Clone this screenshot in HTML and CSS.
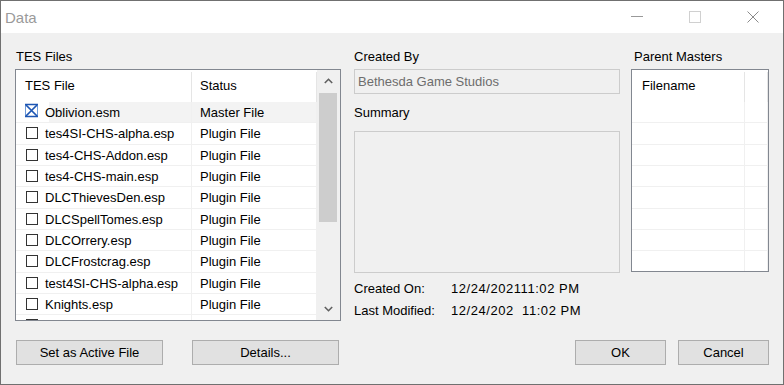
FILE: index.html
```html
<!DOCTYPE html>
<html lang="en">
<head>
  <meta charset="UTF-8" />
  <title>Data</title>
  <link rel="stylesheet" href="styles.css">
</head>
<body>
  <div class="window">
    <div class="titlebar">
      <span class="title">Data</span>
      <div class="caption">
        <span class="cap">
          <svg width="12" height="12" viewBox="0 0 12 12"><line x1="0" y1="5.5" x2="12" y2="5.5" stroke="#999" stroke-width="1"/></svg>
        </span>
        <span class="cap">
          <svg width="12" height="12" viewBox="0 0 12 12"><rect x="0.5" y="0.5" width="11" height="11" fill="none" stroke="#d0d0d0" stroke-width="1"/></svg>
        </span>
        <span class="cap">
          <svg width="12" height="12" viewBox="0 0 12 12"><path d="M0.5 0.5 L11.5 11.5 M11.5 0.5 L0.5 11.5" stroke="#8a8a8a" stroke-width="1" fill="none"/></svg>
        </span>
      </div>
    </div>

    <div class="client">
      <div class="panes">
        <div class="pane pane-files">
          <div class="label pad1">TES Files</div>
          <div class="listview files">
            <div class="lv-main">
              <div class="lv-header">
                <div class="hcell c-name">TES File</div>
                <div class="hcell c-status">Status</div>
              </div>
              <div class="row selected">
                <div class="cell c-name">
                  <span class="state">
                    <svg class="xcheck" width="16" height="16" viewBox="0 0 16 16">
                      <rect x="1.5" y="1.5" width="12" height="12" fill="none" stroke="#6f9ad8" stroke-width="1"/>
                      <path d="M1 1.5 H14 M1 13.5 H14" stroke="#1d56b3" stroke-width="1.6"/>
                      <path d="M2 2 L13 13 M13 2 L2 13" stroke="#1d56b3" stroke-width="1.7"/>
                    </svg>
                  </span>
                  <span class="fname">Oblivion.esm</span>
                </div>
                <div class="cell c-status">Master File</div>
              </div>
              <div class="row">
                <div class="cell c-name"><span class="state"><span class="chk"></span></span><span class="fname">tes4SI-CHS-alpha.esp</span></div>
                <div class="cell c-status">Plugin File</div>
              </div>
              <div class="row">
                <div class="cell c-name"><span class="state"><span class="chk"></span></span><span class="fname">tes4-CHS-Addon.esp</span></div>
                <div class="cell c-status">Plugin File</div>
              </div>
              <div class="row">
                <div class="cell c-name"><span class="state"><span class="chk"></span></span><span class="fname">tes4-CHS-main.esp</span></div>
                <div class="cell c-status">Plugin File</div>
              </div>
              <div class="row">
                <div class="cell c-name"><span class="state"><span class="chk"></span></span><span class="fname">DLCThievesDen.esp</span></div>
                <div class="cell c-status">Plugin File</div>
              </div>
              <div class="row">
                <div class="cell c-name"><span class="state"><span class="chk"></span></span><span class="fname">DLCSpellTomes.esp</span></div>
                <div class="cell c-status">Plugin File</div>
              </div>
              <div class="row">
                <div class="cell c-name"><span class="state"><span class="chk"></span></span><span class="fname">DLCOrrery.esp</span></div>
                <div class="cell c-status">Plugin File</div>
              </div>
              <div class="row">
                <div class="cell c-name"><span class="state"><span class="chk"></span></span><span class="fname">DLCFrostcrag.esp</span></div>
                <div class="cell c-status">Plugin File</div>
              </div>
              <div class="row">
                <div class="cell c-name"><span class="state"><span class="chk"></span></span><span class="fname">test4SI-CHS-alpha.esp</span></div>
                <div class="cell c-status">Plugin File</div>
              </div>
              <div class="row">
                <div class="cell c-name"><span class="state"><span class="chk"></span></span><span class="fname">Knights.esp</span></div>
                <div class="cell c-status">Plugin File</div>
              </div>
              <div class="row">
                <div class="cell c-name"><span class="state"><span class="chk"></span></span></div>
                <div class="cell c-status"></div>
              </div>
            </div>
            <div class="vscroll">
              <div class="sb-btn">
                <svg width="9" height="6" viewBox="0 0 9 6"><path d="M0.8 5 L4.5 1.3 L8.2 5" fill="none" stroke="#606060" stroke-width="1.6"/></svg>
              </div>
              <div class="sb-track"><div class="sb-thumb"></div></div>
              <div class="sb-btn">
                <svg width="9" height="6" viewBox="0 0 9 6"><path d="M0.8 1 L4.5 4.7 L8.2 1" fill="none" stroke="#606060" stroke-width="1.6"/></svg>
              </div>
            </div>
          </div>
        </div>

        <div class="pane pane-info">
          <div class="label">Created By</div>
          <div class="textbox">Bethesda Game Studios</div>
          <div class="label summary-label">Summary</div>
          <div class="summary"></div>
          <div class="dates">
            <div class="date-row"><span class="date-key">Created On:</span><span class="date-val">12/24/202111:02 PM</span></div>
            <div class="date-row"><span class="date-key">Last Modified:</span><span class="date-val">12/24/202&nbsp; 11:02 PM</span></div>
          </div>
        </div>

        <div class="pane pane-masters">
          <div class="label pad3">Parent Masters</div>
          <div class="listview masters">
            <div class="lv-main">
              <div class="lv-header">
                <div class="hcell m-name">Filename</div>
                <div class="hcell m-rest"></div>
              </div>
              <div class="row"><div class="cell m-name"></div><div class="cell m-rest"></div></div>
              <div class="row"><div class="cell m-name"></div><div class="cell m-rest"></div></div>
              <div class="row"><div class="cell m-name"></div><div class="cell m-rest"></div></div>
              <div class="row"><div class="cell m-name"></div><div class="cell m-rest"></div></div>
              <div class="row"><div class="cell m-name"></div><div class="cell m-rest"></div></div>
              <div class="row"><div class="cell m-name"></div><div class="cell m-rest"></div></div>
              <div class="row"><div class="cell m-name"></div><div class="cell m-rest"></div></div>
              <div class="row"><div class="cell m-name"></div><div class="cell m-rest"></div></div>
            </div>
          </div>
        </div>
      </div>

      <div class="buttons">
        <div class="btn-group left">
          <button class="btn wide">Set as Active File</button>
          <button class="btn wide">Details...</button>
        </div>
        <div class="btn-group right">
          <button class="btn">OK</button>
          <button class="btn">Cancel</button>
        </div>
      </div>
    </div>
  </div>
</body>
</html>
```

FILE: styles.css
```css
* {
  box-sizing: border-box;
}

body {
  margin: 0;
  font-family: 'Liberation Sans', Arial, sans-serif;
  font-size: 13px;
  color: #000;
  background: #f0f0f0;
}

.window {
  width: 784px;
  height: 385px;
  border: 1px solid #707070;
  display: flex;
  flex-direction: column;
  overflow: hidden;
}

/* title bar */
.titlebar {
  height: 32px;
  background: #fff;
  display: flex;
  align-items: center;
  justify-content: space-between;
  padding-right: 1px;
}

.title {
  padding-left: 4px;
  font-size: 15px;
  color: #9a9a9a;
}

.caption {
  display: flex;
}

.cap {
  width: 58px;
  height: 32px;
  display: flex;
  align-items: center;
  justify-content: center;
}

.cap svg {
  display: block;
  margin-top: -1px;
}

/* client area */
.client {
  flex: 1;
  background: #f0f0f0;
  padding: 15px 14px 0 14px;
}

.panes {
  display: flex;
}

.pane {
  display: flex;
  flex-direction: column;
}

.pane-files {
  width: 326px;
}

.pane-info {
  width: 266px;
  margin-left: 13px;
}

.pane-masters {
  width: 138px;
  margin-left: 11px;
}

.label {
  height: 21px;
  line-height: 17px;
}

.pad1 {
  padding-left: 1px;
}

.pad3 {
  padding-left: 3px;
}

/* list views */
.listview {
  border: 1px solid #828790;
  background: #fff;
  display: flex;
  overflow: hidden;
}

.files {
  height: 252px;
}

.masters {
  height: 203px;
}

.lv-main {
  flex: 1;
  overflow: hidden;
}

.lv-header {
  display: flex;
  height: 32px;
  background: #fff;
}

.hcell {
  line-height: 32px;
  white-space: nowrap;
  position: relative;
}

.hcell::after {
  content: "";
  position: absolute;
  right: 0;
  top: 2px;
  bottom: 0;
  width: 1px;
  background: #e5e5e5;
}

.row {
  display: flex;
  height: 21.33px;
}

.cell {
  display: flex;
  align-items: center;
  height: 100%;
  padding-top: 1px;
  border-bottom: 1px solid #f0f0f0;
  border-right: 1px solid #f0f0f0;
  white-space: nowrap;
  overflow: hidden;
}

.c-name {
  width: 176px;
  padding-left: 9px;
}

.c-status {
  width: 125px;
  padding-left: 8px;
}

.row .c-name {
  padding-left: 8px;
}

.row.selected .cell {
  background: #f3f3f3;
}

.row.selected .c-name {
  background: linear-gradient(to right, #fff 33px, #f3f3f3 33px);
}

.state {
  width: 16px;
  height: 16px;
  display: flex;
  align-items: center;
  flex-shrink: 0;
}

.xcheck {
  display: block;
  margin-top: -4px;
}

.chk {
  width: 12px;
  height: 12px;
  margin-left: 2px;
  margin-top: -1px;
  border: 1px solid #333;
  background: #fff;
}

.fname {
  margin-left: 5px;
}

.m-name {
  width: 113px;
  padding-left: 10px;
}

.m-rest {
  flex: 1;
}

/* scroll bar */
.vscroll {
  width: 23px;
  background: #f0f0f0;
  display: flex;
  flex-direction: column;
}

.sb-btn {
  height: 22px;
  display: flex;
  align-items: center;
  justify-content: center;
  padding-right: 1px;
}

.sb-track {
  flex: 1;
  padding-top: 1px;
}

.sb-thumb {
  width: 18px;
  height: 129px;
  margin-left: 2px;
  background: #cdcdcd;
}

/* info pane */
.textbox {
  height: 25px;
  border: 1px solid #cccccc;
  background: #f0f0f0;
  color: #6d6d6d;
  line-height: 23px;
  padding-left: 3px;
}

.summary-label {
  height: auto;
  margin: 10px 0;
}

.summary {
  height: 142px;
  border: 1px solid #cccccc;
  background: #f0f0f0;
}

.dates {
  margin-top: 5px;
}

.date-row {
  display: flex;
  line-height: 22px;
  white-space: nowrap;
}

.date-key {
  width: 97px;
}

.date-val {
  letter-spacing: 0.55px;
}

/* buttons */
.buttons {
  display: flex;
  justify-content: space-between;
  margin-top: 18px;
}

.btn-group {
  display: flex;
}

.btn-group.left {
  gap: 29px;
  margin-left: 1px;
}

.btn-group.right {
  gap: 12px;
}

.btn {
  width: 91px;
  height: 25px;
  border: 1px solid #adadad;
  background: #e1e1e1;
  font-family: 'Liberation Sans', Arial, sans-serif;
  font-size: 13px;
  color: #000;
  padding: 0;
}

.btn.wide {
  width: 147px;
}
```
